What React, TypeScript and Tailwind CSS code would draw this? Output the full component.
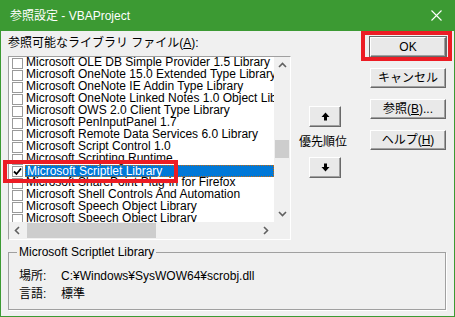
import React from "react";

const rows = [
  "Microsoft OLE DB Simple Provider 1.5 Library",
  "Microsoft OneNote 15.0 Extended Type Library",
  "Microsoft OneNote IE Addin Type Library",
  "Microsoft OneNote Linked Notes 1.0 Object Library",
  "Microsoft OWS 2.0 Client Type Library",
  "Microsoft PenInputPanel 1.7",
  "Microsoft Remote Data Services 6.0 Library",
  "Microsoft Script Control 1.0",
  "Microsoft Scripting Runtime",
  "Microsoft Scriptlet Library",
  "Microsoft SharePoint Plug-in for Firefox",
  "Microsoft Shell Controls And Automation",
  "Microsoft Speech Object Library",
  "Microsoft Speech Object Library",
];

const Chevron = ({ dir }: { dir: "up" | "down" | "left" | "right" }) => {
  const d = {
    up: "M1 6 L4.5 2.5 L8 6",
    down: "M1 3 L4.5 6.5 L8 3",
    left: "M6 1 L2.5 4.5 L6 8",
    right: "M3 1 L6.5 4.5 L3 8",
  }[dir];
  return (
    <svg width="9" height="9" viewBox="0 0 9 9">
      <path d={d} fill="none" stroke="#606060" strokeWidth="1.6" />
    </svg>
  );
};

const Arrow = ({ up }: { up?: boolean }) => (
  <svg width="9" height="9" viewBox="0 0 9 9" className={up ? "" : "rotate-180"}>
    <path d="M4.5 0.5 L8.5 5 L6 5 L6 8.5 L3 8.5 L3 5 L0.5 5 Z" fill="#000" />
  </svg>
);

const Button = ({ children, def }: { children: React.ReactNode; def?: boolean }) => (
  <div
    className={
      "h-[20px] w-[76px] flex items-center justify-center bg-[#e9e9e9] border border-t-white border-l-white border-r-[#696969] border-b-[#696969] shadow-[inset_-1px_-1px_0_#a0a0a0] text-[12px] text-black " +
      (def ? "outline outline-1 outline-[#6a6a6a]" : "")
    }
  >
    {children}
  </div>
);

const Check = ({ on }: { on?: boolean }) => (
  <div className="w-[11px] h-[11px] shrink-0 bg-white border border-[#9a9a9a] flex items-center justify-center">
    {on && (
      <svg width="9" height="9" viewBox="0 0 9 9">
        <path d="M1 4.5 L3.5 7 L8 1.5" fill="none" stroke="#000" strokeWidth="1.8" />
      </svg>
    )}
  </div>
);

export default function App() {
  return (
    <div className="w-[455px] h-[317px] bg-[#3c9a33] flex flex-col font-['Liberation_Sans','Noto_Sans_CJK_JP',sans-serif] text-[12px] leading-[12px] text-black select-none">
      <div className="h-[31px] flex items-center justify-between pl-[10px] pr-[13px] text-white shrink-0">
        <span className="text-[12px]">参照設定 - VBAProject</span>
        <svg width="11" height="11" viewBox="0 0 11 11">
          <path d="M0.5 0.5 L10.5 10.5 M10.5 0.5 L0.5 10.5" stroke="#fff" strokeWidth="1.1" />
        </svg>
      </div>
      <div className="relative flex-1 mx-[1px] mb-[1px] bg-[#f0f0f0] flex flex-col pl-[7px] pr-[8px]">
        <div className="flex pt-[4px]">
          <div className="w-[283px] flex flex-col">
            <div className="h-[16px] leading-[16px]">
              参照可能なライブラリ ファイル(<span className="underline">A</span>):
            </div>
            <div className="mt-[5px] h-[184px] border border-t-[#a0a0a0] border-l-[#a0a0a0] border-r-white border-b-white bg-white flex flex-col overflow-hidden">
              <div className="flex h-[165px]">
                <div className="flex-1 overflow-hidden">
                  {rows.map((r, i) => {
                    const sel = i === 9;
                    return (
                      <div key={i} className="h-[12px] flex items-center pl-[3px] whitespace-nowrap">
                        <Check on={sel} />
                        <span
                          className={
                            "ml-[2px] h-[12px] leading-[11px] pl-[1px] " +
                            (sel ? "bg-[#0078d7] text-white flex-1 border border-dotted border-[#c46a10]" : "")
                          }
                        >
                          {r}
                        </span>
                      </div>
                    );
                  })}
                </div>
                <div className="w-[16px] bg-[#f0f0f0] flex flex-col">
                  <div className="h-[17px] flex items-center justify-center">
                    <Chevron dir="up" />
                  </div>
                  <div className="h-[66px]" />
                  <div className="h-[18px] bg-[#cdcdcd] mx-[1px]" />
                  <div className="flex-1" />
                  <div className="h-[17px] flex items-center justify-center">
                    <Chevron dir="down" />
                  </div>
                </div>
              </div>
              <div className="h-[17px] flex bg-[#f0f0f0]">
                <div className="flex-1 flex items-center">
                  <div className="w-[17px] flex items-center justify-center">
                    <Chevron dir="left" />
                  </div>
                  <div className="h-[15px] w-[129px] bg-[#cdcdcd] ml-[1px]" />
                  <div className="flex-1" />
                  <div className="w-[17px] flex items-center justify-center">
                    <Chevron dir="right" />
                  </div>
                </div>
                <div className="w-[16px]" />
              </div>
            </div>
          </div>
          <div className="ml-[8px] w-[48px] flex flex-col items-center pt-[71px]">
            <div className="ml-[4px] h-[21px] w-[32px] flex items-center justify-center bg-[#e9e9e9] border border-t-white border-l-white border-r-[#696969] border-b-[#696969] shadow-[inset_-1px_-1px_0_#a0a0a0]">
              <Arrow up />
            </div>
            <div className="h-[30px] leading-[30px] whitespace-nowrap">優先順位</div>
            <div className="ml-[4px] h-[21px] w-[32px] flex items-center justify-center bg-[#e9e9e9] border border-t-white border-l-white border-r-[#696969] border-b-[#696969] shadow-[inset_-1px_-1px_0_#a0a0a0]">
              <Arrow />
            </div>
          </div>
          <div className="ml-auto w-[76px] flex flex-col gap-[11px] pt-[2px]">
            <Button def>OK</Button>
            <Button>キャンセル</Button>
            <Button>
              参照(<span className="underline">B</span>)...
            </Button>
            <Button>
              ヘルプ(<span className="underline">H</span>)
            </Button>
          </div>
        </div>
        <fieldset className="mt-[5px] h-[65px] border border-[#a0a0a0] shadow-[1px_1px_0_#fff] pl-[10px] pr-[10px] w-[438px]">
          <legend className="ml-[-2px] px-[2px] leading-[14px]">Microsoft Scriptlet Library</legend>
          <div className="flex mt-[8px] h-[18px] items-center">
            <span className="w-[42px]">場所:</span>
            <span>C:¥Windows¥SysWOW64¥scrobj.dll</span>
          </div>
          <div className="flex h-[18px] items-center">
            <span className="w-[42px]">言語:</span>
            <span>標準</span>
          </div>
        </fieldset>
        <div className="absolute left-[2px] top-[129px] w-[175px] h-[23px] border-[4px] border-[#ec1c24]" />
        <div className="absolute left-[360px] top-[0px] w-[91px] h-[30px] border-[4px] border-[#ec1c24]" />
      </div>
    </div>
  );
}
